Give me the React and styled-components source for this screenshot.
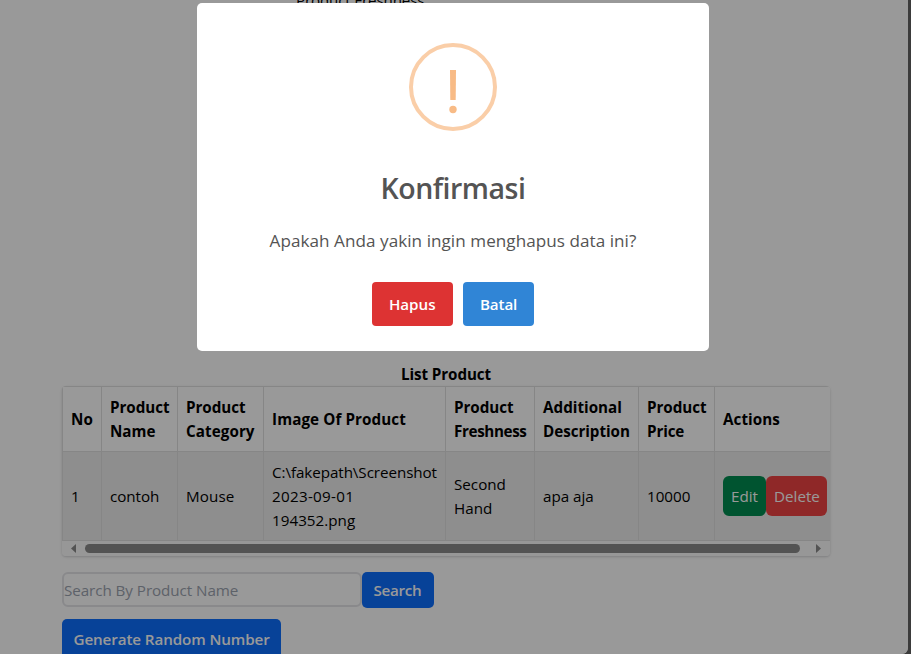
import React from "react";
import styled, { createGlobalStyle } from "styled-components";

const GlobalStyle = createGlobalStyle`
  *, *::before, *::after { box-sizing: border-box; }
  html, body { margin: 0; height: 100%; overflow: hidden; background: #3b3b3b; }
  body {
    font-family: "Open Sans", "Noto Sans", sans-serif;
    font-size: 15.2px;
    line-height: 24px;
    color: #000;
  }
  button, input { font: inherit; margin: 0; }
`;

const Window = styled.div`
  position: relative;
  width: 908px;
  height: 654px;
  overflow: hidden;
  background: #fff;
  border-bottom-right-radius: 6px;
`;

const Page = styled.main`
  display: flex;
  flex-direction: column;
  align-items: flex-start;
  width: 768px;
  height: 100%;
  margin-left: 62px;
`;

const Text = styled.span`
  display: block;
  white-space: nowrap;
  letter-spacing: ${(p) => p.$spacing || 0}px;
`;

const FormLabel = styled.div`
  height: 362px;
  flex: none;
  margin-left: 234px;
  margin-top: -12px;
`;

const ListTitle = styled.h1`
  margin: 0;
  width: 100%;
  flex: none;
  height: 36px;
  padding-top: 12px;
  text-align: center;
  font-size: inherit;
  line-height: 24px;
  font-weight: 700;
`;

const TableBox = styled.div`
  flex: none;
  width: 768px;
  overflow: hidden;
  border-radius: 4px;
  box-shadow: 0 1px 3px rgba(0, 0, 0, 0.1), 0 1px 2px rgba(0, 0, 40, 0.08);
`;

const Row = styled.div`
  display: grid;
  grid-template-columns: 39px 76px 86px 182px 89px 104px 76px 116px;
  height: ${(p) => (p.$head ? 65 : 89)}px;
  background: ${(p) => (p.$head ? "#fff" : "#ededed")};
  font-weight: ${(p) => (p.$head ? 700 : 400)};
  border-top: 1px solid #dfdfe0;
`;

const Cell = styled.div`
  display: flex;
  flex-direction: ${(p) => (p.$actions ? "row" : "column")};
  justify-content: ${(p) => (p.$actions ? "flex-start" : "center")};
  align-items: ${(p) => (p.$actions ? "center" : "flex-start")};
  padding-left: 8px;
  border-left: 1px solid #dfdfe0;
`;

const ScrollBar = styled.div`
  display: flex;
  align-items: center;
  height: 16px;
  padding: 0 9px;
  border-top: 1px solid #dfdfe0;
  background: #fcfcfc;
`;

const Thumb = styled.div`
  width: 715px;
  height: 9px;
  margin: 0 16px 0 9px;
  border-radius: 5px;
  background: #8b8b8b;
`;

const ActionButton = styled.button`
  width: ${(p) => p.$width}px;
  height: 40px;
  padding: 0 0 0 8px;
  border: 0;
  border-radius: 6px;
  background: ${(p) => p.$color};
  color: #fff;
  text-align: left;
`;

const SearchBar = styled.div`
  display: flex;
  align-items: flex-start;
  flex: none;
  margin-top: 16px;
`;

const SearchInput = styled.input`
  width: 300px;
  height: 35px;
  padding: 1px 0 0;
  border: 2px solid #e5e5e8;
  border-radius: 6px;
  background: #fff;
  letter-spacing: -0.06px;
  &::placeholder { color: #9ca3af; opacity: 1; }
`;

const PrimaryButton = styled.button`
  flex: none;
  width: ${(p) => p.$width}px;
  height: ${(p) => p.$height}px;
  padding: 0 0 0 11.5px;
  border: 0;
  border-radius: 5px;
  background: #0d6efd;
  color: #fff;
  font-weight: 600;
  text-align: left;
  margin-top: ${(p) => p.$top || 0}px;
`;

const Overlay = styled.div`
  position: absolute;
  inset: 0;
  display: flex;
  align-items: flex-start;
  padding: 3px 0 0 197px;
  background: rgba(0, 0, 0, 0.4);
`;

const Dialog = styled.section`
  display: flex;
  flex-direction: column;
  align-items: center;
  width: 512px;
  height: 348px;
  padding-top: 40px;
  border-radius: 5px;
  background: #fff;
  color: #545454;
`;

const WarningSvg = styled.svg`
  display: block;
  flex: none;
`;

const DialogTitle = styled.h2`
  margin: 35px 0 0;
  font-size: 28.5px;
  line-height: 44px;
  font-weight: 600;
`;

const DialogMessage = styled.p`
  margin: 17px 0 0;
  font-size: 17.1px;
  line-height: 27px;
`;

const DialogActions = styled.div`
  display: flex;
  gap: 10px;
  margin-top: 28px;
`;

const DialogButton = styled.button`
  width: ${(p) => p.$width}px;
  height: 44px;
  padding: 0 0 0 17px;
  border: 0;
  border-radius: 4px;
  background: ${(p) => p.$color};
  color: #fff;
  font-weight: 600;
  text-align: left;
`;

const headers = [
  [["No", 0.2]],
  [["Product", -0.04], ["Name", -0.01]],
  [["Product", -0.04], ["Category", 0.08]],
  [["Image Of Product", 0.1]],
  [["Product", -0.04], ["Freshness", -0.36]],
  [["Additional", 0.02], ["Description", -0.04]],
  [["Product", -0.04], ["Price", -0.14]],
  [["Actions", 0.05]],
];

const product = [
  [["1", 0]],
  [["contoh", -0.04]],
  [["Mouse", 0.1]],
  [["C:\\fakepath\\Screenshot", -0.07], ["2023-09-01", 0.3], ["194352.png", 0.03]],
  [["Second", 0], ["Hand", 0.05]],
  [["apa aja", -0.02]],
  [["10000", 0]],
];

const Lines = ({ lines }) =>
  lines.map(([text, spacing]) => (
    <Text key={text} $spacing={spacing}>{text}</Text>
  ));

const Arrow = ({ d }) => (
  <svg width="5" height="9" viewBox="0 0 5 9">
    <path d={d} fill="#8b8b8b" />
  </svg>
);

export default function App() {
  return (
    <>
      <GlobalStyle />
      <Window>
        <Page>
          <FormLabel><Text $spacing={-0.17}>Product Freshness</Text></FormLabel>
          <ListTitle><Text $spacing={-0.09}>List Product</Text></ListTitle>
          <TableBox>
            <Row $head>
              {headers.map((lines, i) => <Cell key={i}><Lines lines={lines} /></Cell>)}
            </Row>
            <Row>
              {product.map((lines, i) => <Cell key={i}><Lines lines={lines} /></Cell>)}
              <Cell $actions>
                <ActionButton $width={43} $color="#008c50"><Text>Edit</Text></ActionButton>
                <ActionButton $width={61} $color="#ef4444"><Text>Delete</Text></ActionButton>
              </Cell>
            </Row>
            <ScrollBar>
              <Arrow d="M5 0v9L0 4.5z" />
              <Thumb />
              <Arrow d="M0 0v9l5-4.5z" />
            </ScrollBar>
          </TableBox>
          <SearchBar>
            <SearchInput placeholder="Search By Product Name" />
            <PrimaryButton $width={72} $height={36}><Text $spacing={-0.28}>Search</Text></PrimaryButton>
          </SearchBar>
          <PrimaryButton $width={219} $height={40} $top={11}>
            <Text $spacing={-0.1}>Generate Random Number</Text>
          </PrimaryButton>
        </Page>
        <Overlay>
          <Dialog role="dialog" aria-modal="true">
            <WarningSvg width="88" height="88" viewBox="0 0 88 88">
              <circle cx="44" cy="44" r="42" fill="none" stroke="#facea8" strokeWidth="4" />
              <path d="M41 27h6l-.3 30h-5.4z" fill="#f8bb86" />
              <circle cx="44" cy="66.5" r="3.7" fill="#f8bb86" />
            </WarningSvg>
            <DialogTitle><Text $spacing={-0.5}>Konfirmasi</Text></DialogTitle>
            <DialogMessage>
              <Text $spacing={0.05}>Apakah Anda yakin ingin menghapus data ini?</Text>
            </DialogMessage>
            <DialogActions>
              <DialogButton $width={81} $color="#dd3333"><Text $spacing={-0.05}>Hapus</Text></DialogButton>
              <DialogButton $width={71} $color="#3085d6"><Text $spacing={-0.15}>Batal</Text></DialogButton>
            </DialogActions>
          </Dialog>
        </Overlay>
      </Window>
    </>
  );
}
